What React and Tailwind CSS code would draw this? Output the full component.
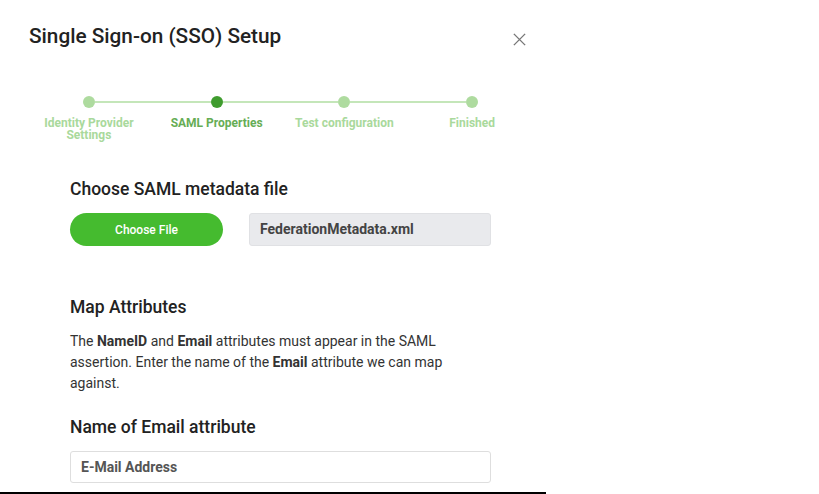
const steps = [
    { label: "Identity Provider Settings", active: false },
    { label: "SAML Properties", active: true },
    { label: "Test configuration", active: false },
    { label: "Finished", active: false },
];

function Stepper() {
    return (
        <div className="grid grid-cols-4 w-[511px] ml-[25px] mt-[46px]">
            {steps.map((s, i) => (
                <div key={s.label} className="flex flex-col items-center">
                    <div className="flex items-center w-full">
                        <div className={`flex-1 h-[2px] ${i === 0 ? "bg-transparent" : "bg-[#c4e6b9]"}`}></div>
                        <div className={`w-[12px] h-[12px] rounded-full ${s.active ? "bg-[#3f9c2e]" : "bg-[#aedb9f]"}`}></div>
                        <div className={`flex-1 h-[2px] ${i === steps.length - 1 ? "bg-transparent" : "bg-[#c4e6b9]"}`}></div>
                    </div>
                    <div className={`mt-[9px] text-[12px] leading-[12px] font-bold text-center w-[110px] ${s.active ? "text-[#66ad55]" : "text-[#a9d99c]"}`}>
                        {s.label === "Identity Provider Settings" ? (
                            <>Identity Provider<br />Settings</>
                        ) : s.label}
                    </div>
                </div>
            ))}
        </div>
    );
}

export default function App() {
    return (
        <div className="w-[819px] h-[494px] bg-white" style={{ fontFamily: "Roboto, 'Liberation Sans', sans-serif" }}>
            <div className="w-[546px] h-[494px] border-b-2 border-black flex flex-col">

                {/* Header */}
                <div className="flex items-start justify-between pl-[29px] pr-[19px] pt-[22px]">
                    <h1 className="text-[20.75px] leading-[28px] font-medium text-[#222]">
                        Single Sign-on (SSO) Setup
                    </h1>
                    <button className="mt-[10px] text-[#777]">
                        <svg width="15" height="15" viewBox="0 0 16 16" fill="none" stroke="currentColor" strokeWidth="1.5">
                            <path d="M2 2 L14 14 M14 2 L2 14" />
                        </svg>
                    </button>
                </div>

                <Stepper />

                <div className="ml-[70px] w-[421px] mt-[36px]">
                    <h2 className="text-[17.5px] leading-[24px] font-medium text-[#222]">
                        Choose SAML metadata file
                    </h2>
                    <div className="flex items-center mt-[12px]">
                        <button className="w-[153px] h-[33px] rounded-full bg-[#45bb2f] text-white text-[12px] font-medium">
                            Choose File
                        </button>
                        <div className="ml-[26px] w-[242px] h-[33px] rounded-[3px] bg-[#e9eaed] border border-[#e0e1e4] flex items-center px-[10px] text-[14px] font-bold text-[#444]">
                            FederationMetadata.xml
                        </div>
                    </div>

                    <h2 className="mt-[49px] text-[17.5px] leading-[24px] font-medium text-[#222]">
                        Map Attributes
                    </h2>
                    <p className="mt-[12px] text-[14px] leading-[21px] text-[#333]">
                        The <b>NameID</b> and <b>Email</b> attributes must appear in the SAML assertion. Enter the name of the <b>Email</b> attribute we can map against.
                    </p>

                    <h2 className="mt-[21px] text-[17.5px] leading-[24px] font-medium text-[#222]">
                        Name of Email attribute
                    </h2>
                    <div className="mt-[12px] h-[32px] rounded-[3px] border border-[#dedede] flex items-center px-[10px] text-[14px] font-bold text-[#555]">
                        E-Mail Address
                    </div>
                </div>

            </div>
        </div>
    );
}
